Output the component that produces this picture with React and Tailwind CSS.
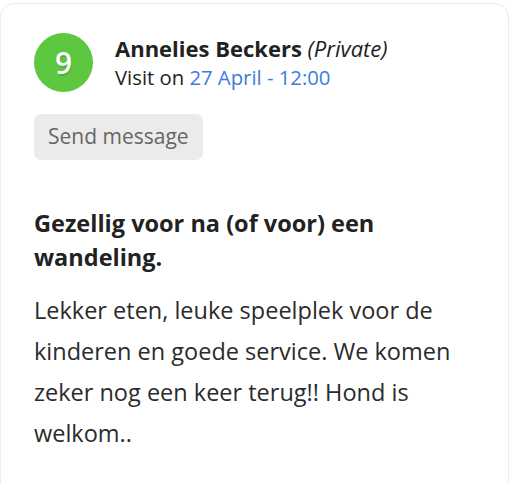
export default function App() {
  return (
    <div className="w-[512px] h-[484px] bg-white overflow-hidden pt-[3px]" style={{ fontFamily: '"Open Sans", sans-serif' }}>
      <div className="mr-[3px] h-[520px] rounded-[14px] border border-[#ececec] bg-white pl-[33px] pt-[29px]">
        <div className="flex items-center">
          <div className="flex h-[59px] w-[59px] items-center justify-center rounded-full bg-[#5cc73f] text-[30px] font-semibold text-white [text-shadow:1px_2px_0_rgba(0,0,0,0.12)]">
            9
          </div>
          <div className="ml-[22px] flex flex-col text-[#222]">
            <div className="text-[22px] leading-[29px]">
              <span className="font-bold">Annelies Beckers</span>{" "}
              <span className="italic">(Private)</span>
            </div>
            <div className="text-[20.3px] leading-[28px]">
              Visit on <span className="text-[#3d7be0]">27 April - 12:00</span>
            </div>
          </div>
        </div>
        <button className="mt-[22px] h-[46px] rounded-[7px] bg-[#ebebeb] px-[14px] text-[21px] text-[#666]">
          Send message
        </button>
        <h2 className="mt-[46px] w-[420px] text-[23.5px] font-bold leading-[34px] text-[#222]">
          Gezellig voor na (of voor) een wandeling.
        </h2>
        <p className="mt-[16px] w-[440px] text-[23.5px] leading-[41px] text-[#2b2b2b]">
          Lekker eten, leuke speelplek voor de kinderen en goede service. We komen zeker nog een keer terug!! Hond is welkom..
        </p>
      </div>
    </div>
  );
}
